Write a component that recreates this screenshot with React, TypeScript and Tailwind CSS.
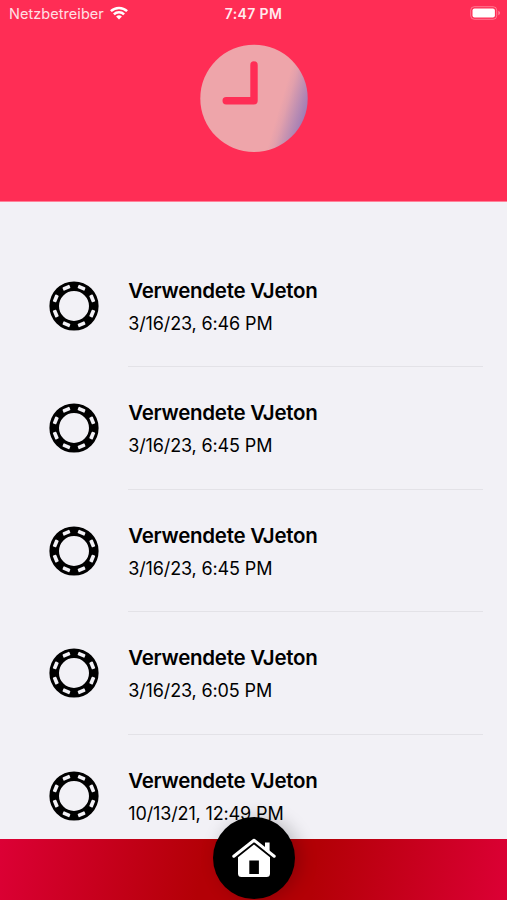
const entries = [
  "3/16/23, 6:46 PM",
  "3/16/23, 6:45 PM",
  "3/16/23, 6:45 PM",
  "3/16/23, 6:05 PM",
  "10/13/21, 12:49 PM",
];

const slotAngles = [22.5, 67.5, 112.5, 157.5, 202.5, 247.5, 292.5, 337.5];

function WifiIcon() {
  return (
    <svg className="h-[14px] w-[18px]" viewBox="0 0 18 14" fill="none" stroke="white" strokeWidth="2.5">
      <path d="M0.9 5.2a11.6 11.6 0 0 1 16.2 0" />
      <path d="M3.9 8.3a7.3 7.3 0 0 1 10.2 0" />
      <path d="M9 13.6 6.1 10.6a4.2 4.2 0 0 1 5.8 0Z" fill="white" stroke="none" />
    </svg>
  );
}

function BatteryIcon() {
  return (
    <svg className="h-[14px] w-[31px]" viewBox="0 0 31 14" fill="none">
      <rect x="0.7" y="0.7" width="26" height="12.6" rx="3.6" stroke="white" strokeOpacity="0.35" strokeWidth="1" />
      <rect x="2.5" y="2.4" width="22.4" height="9.2" rx="2" fill="white" />
      <path d="M28.3 4.8c2.3.8 2.3 3.6 0 4.4Z" fill="white" fillOpacity="0.4" />
    </svg>
  );
}

function ClockIcon() {
  return (
    <svg className="h-[109px] w-[108px]" viewBox="0 0 108 109" fill="none">
      <defs>
        <linearGradient id="clockFace" gradientUnits="userSpaceOnUse" x1="78" y1="68" x2="108" y2="77">
          <stop offset="0" stopColor="#eea5aa" />
          <stop offset="0.2" stopColor="#e2a0ac" />
          <stop offset="0.55" stopColor="#bd8eb2" />
          <stop offset="0.85" stopColor="#a17db5" />
          <stop offset="1" stopColor="#a17db5" />
        </linearGradient>
      </defs>
      <circle cx="54" cy="54.4" r="53.7" fill="url(#clockFace)" />
      <path d="M54 21V56.7H26.2" stroke="#ff2d55" strokeWidth="7.4" strokeLinecap="round" strokeLinejoin="round" />
    </svg>
  );
}

function ChipIcon() {
  return (
    <svg className="h-[50px] w-[50px] shrink-0" viewBox="-25 -25 50 50">
      <circle r="19.8" fill="none" stroke="black" strokeWidth="9.6" />
      {slotAngles.map((angle) => (
        <rect key={angle} x="-3.7" y="-21.6" width="7.4" height="3.7" rx="0.8" fill="#f2f1f6" transform={`rotate(${angle})`} />
      ))}
    </svg>
  );
}

function HomeIcon() {
  return (
    <svg className="h-[40px] w-[44px]" viewBox="0 0 44 40">
      <path d="M33 4.6h4.6v11.5L33 12.4Z" fill="white" />
      <path d="M1.8 18.2 22 2.2l20.2 16" fill="none" stroke="white" strokeWidth="3" strokeLinecap="round" strokeLinejoin="round" />
      <path
        fillRule="evenodd"
        d="M22 6.6 38 19.2V35.4a3.5 3.5 0 0 1-3.5 3.5h-25A3.5 3.5 0 0 1 6 35.4V19.2ZM17.3 22.6V36h9.6V22.6Z"
        fill="white"
      />
    </svg>
  );
}

export default function App() {
  return (
    <div className="flex h-[900px] w-[507px] flex-col overflow-hidden bg-[#f2f1f6] font-[Inter,sans-serif] text-black">
      <header className="flex h-[202px] shrink-0 flex-col items-center border-b border-[#ff8199] bg-[#ff2d55]">
        <div className="grid h-[26px] w-full grid-cols-3 items-center pr-[6px] pl-[9px] text-white">
          <div className="flex items-center gap-[6px]">
            <span className="pt-[2px] text-[14.5px] tracking-[0.05px] whitespace-nowrap opacity-85">Netzbetreiber</span>
            <WifiIcon />
          </div>
          <span className="-ml-[3px] text-center text-[14px] font-semibold tracking-[0.35px] whitespace-nowrap opacity-90">7:47 PM</span>
          <div className="flex justify-end">
            <BatteryIcon />
          </div>
        </div>
        <div className="mt-[18px]">
          <ClockIcon />
        </div>
      </header>

      <main className="min-h-0 flex-1 overflow-hidden pt-[42.6px]">
        {entries.map((date, index) => (
          <div key={index} className="flex h-[122.6px] pl-[49.3px]">
            <div className="pt-[36px]">
              <ChipIcon />
            </div>
            <div className="mr-6 ml-[29px] flex-1 border-b border-[#e3e2e7] pt-[32px]">
              <div className="text-[20.5px] leading-[28px] font-semibold tracking-[-0.28px] whitespace-nowrap">Verwendete VJeton</div>
              <div className="mt-[6px] text-[18px] leading-[26px] tracking-[-0.14px] whitespace-nowrap">{date}</div>
            </div>
          </div>
        ))}
      </main>

      <footer className="relative flex h-[61px] shrink-0 justify-center bg-[linear-gradient(100deg,#dc0035_0%,#b30006_40%,#b30006_62%,#dc0035_100%)]">
        <div className="absolute -top-[22px] flex h-[82px] w-[82px] items-center justify-center rounded-full bg-black shadow-[5px_0px_18px_rgba(0,0,0,0.22)]">
          <HomeIcon />
        </div>
      </footer>
    </div>
  );
}
